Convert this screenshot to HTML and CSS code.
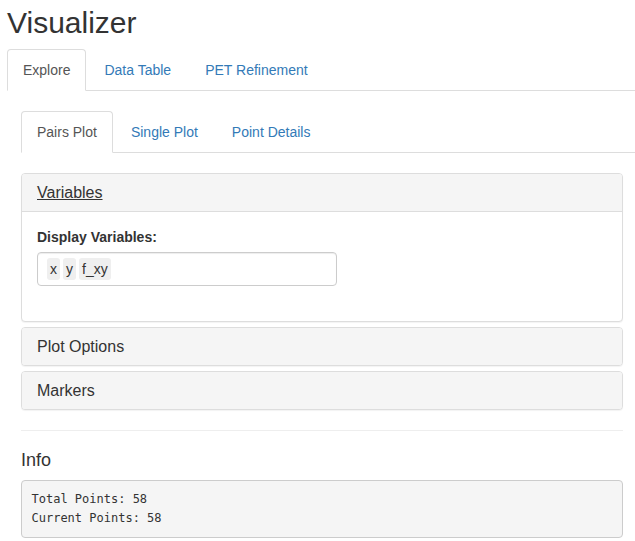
FILE: index.html
```html
<!DOCTYPE html>
<html>
<head>
<meta charset="utf-8">
<title>Visualizer</title>
<link rel="stylesheet" href="styles.css">
</head>
<body>
<div class="page">
  <h2 class="title">Visualizer</h2>
  <ul class="nav-tabs">
    <li><a class="tab active">Explore</a></li>
    <li><a class="tab">Data Table</a></li>
    <li><a class="tab">PET Refinement</a></li>
  </ul>
  <div class="tab-content">
    <ul class="nav-tabs inner-tabs">
      <li><a class="tab active">Pairs Plot</a></li>
      <li><a class="tab">Single Plot</a></li>
      <li><a class="tab">Point Details</a></li>
    </ul>
    <div class="main">
      <div class="panel-group">
        <div class="panel">
          <div class="panel-heading open"><a class="panel-title link">Variables</a></div>
          <div class="panel-body">
            <label class="control-label">Display Variables:</label>
            <div class="selectize">
              <span class="chip">x</span><span class="chip">y</span><span class="chip">f_xy</span>
            </div>
          </div>
        </div>
        <div class="panel">
          <div class="panel-heading"><span class="panel-title">Plot Options</span></div>
        </div>
        <div class="panel">
          <div class="panel-heading"><span class="panel-title">Markers</span></div>
        </div>
      </div>
      <hr class="divider">
      <h4 class="info-title">Info</h4>
      <pre class="info">Total Points: 58
Current Points: 58</pre>
    </div>
  </div>
</div>
</body>
</html>
```
FILE: styles.css
```css
html, body {
  margin: 0;
  padding: 0;
  background: #fff;
}
body {
  font-family: "Liberation Sans", Arial, sans-serif;
  font-size: 14px;
  line-height: 1.42857;
  color: #333;
}
.page {
  padding-left: 7px;
}
.title {
  font-size: 30px;
  font-weight: normal;
  line-height: 33px;
  margin: 6px 0 10px;
  color: #333;
}
.nav-tabs {
  display: flex;
  list-style: none;
  margin: 0;
  padding: 0;
  border-bottom: 1px solid #ddd;
}
.nav-tabs li {
  margin-bottom: -1px;
  margin-right: 2px;
}
.tab {
  display: block;
  padding: 10px 15px;
  line-height: 20px;
  border: 1px solid transparent;
  border-radius: 4px 4px 0 0;
  color: #337ab7;
  text-decoration: none;
}
.tab.active {
  color: #555;
  background: #fff;
  border-color: #ddd;
  border-bottom-color: transparent;
}
.tab-content {
  padding-left: 14px;
}
.inner-tabs {
  margin-top: 20px;
}
.main {
  padding-right: 12px;
}
.panel-group {
  margin-top: 20px;
  display: flex;
  flex-direction: column;
  gap: 5px;
}
.panel {
  border: 1px solid #ddd;
  border-radius: 4px;
  background: #fff;
  box-shadow: 0 1px 1px rgba(0, 0, 0, 0.05);
  overflow: hidden;
}
.panel-heading {
  background: #f5f5f5;
  padding: 10px 15px;
  color: #333;
  font-size: 16px;
  line-height: 17px;
  height: 17px;
}
.panel-heading.open {
  border-bottom: 1px solid #ddd;
}
.panel-title {
  display: block;
  font-size: 16px;
  line-height: 17px;
  color: #333;
}
.panel-title.link {
  display: inline;
  text-decoration: underline;
}
.panel-body {
  padding: 15px 15px 15px;
}
.control-label {
  display: block;
  font-weight: bold;
  margin-bottom: 5px;
  line-height: 20px;
}
.selectize {
  width: 300px;
  height: 34px;
  box-sizing: border-box;
  border: 1px solid #ccc;
  border-radius: 4px;
  box-shadow: inset 0 1px 1px rgba(0, 0, 0, 0.075);
  padding: 5px 9px;
  display: flex;
  align-items: center;
  gap: 3px;
  margin-bottom: 20px;
}
.chip {
  background: #efefef;
  color: #333;
  padding: 0 3px;
  line-height: 22px;
  border-radius: 3px;
}
.divider {
  border: 0;
  border-top: 1px solid #eee;
  margin: 20px 0 20px;
}
.info-title {
  font-size: 18px;
  font-weight: normal;
  line-height: 19.8px;
  margin: 0 0 9px;
}
.info {
  margin: 0;
  padding: 9.5px;
  background: #f5f5f5;
  border: 1px solid #ccc;
  border-radius: 4px;
  font-family: "DejaVu Sans Mono", "Liberation Mono", monospace;
  font-size: 12px;
  line-height: 18.57px;
  color: #333;
}
```
